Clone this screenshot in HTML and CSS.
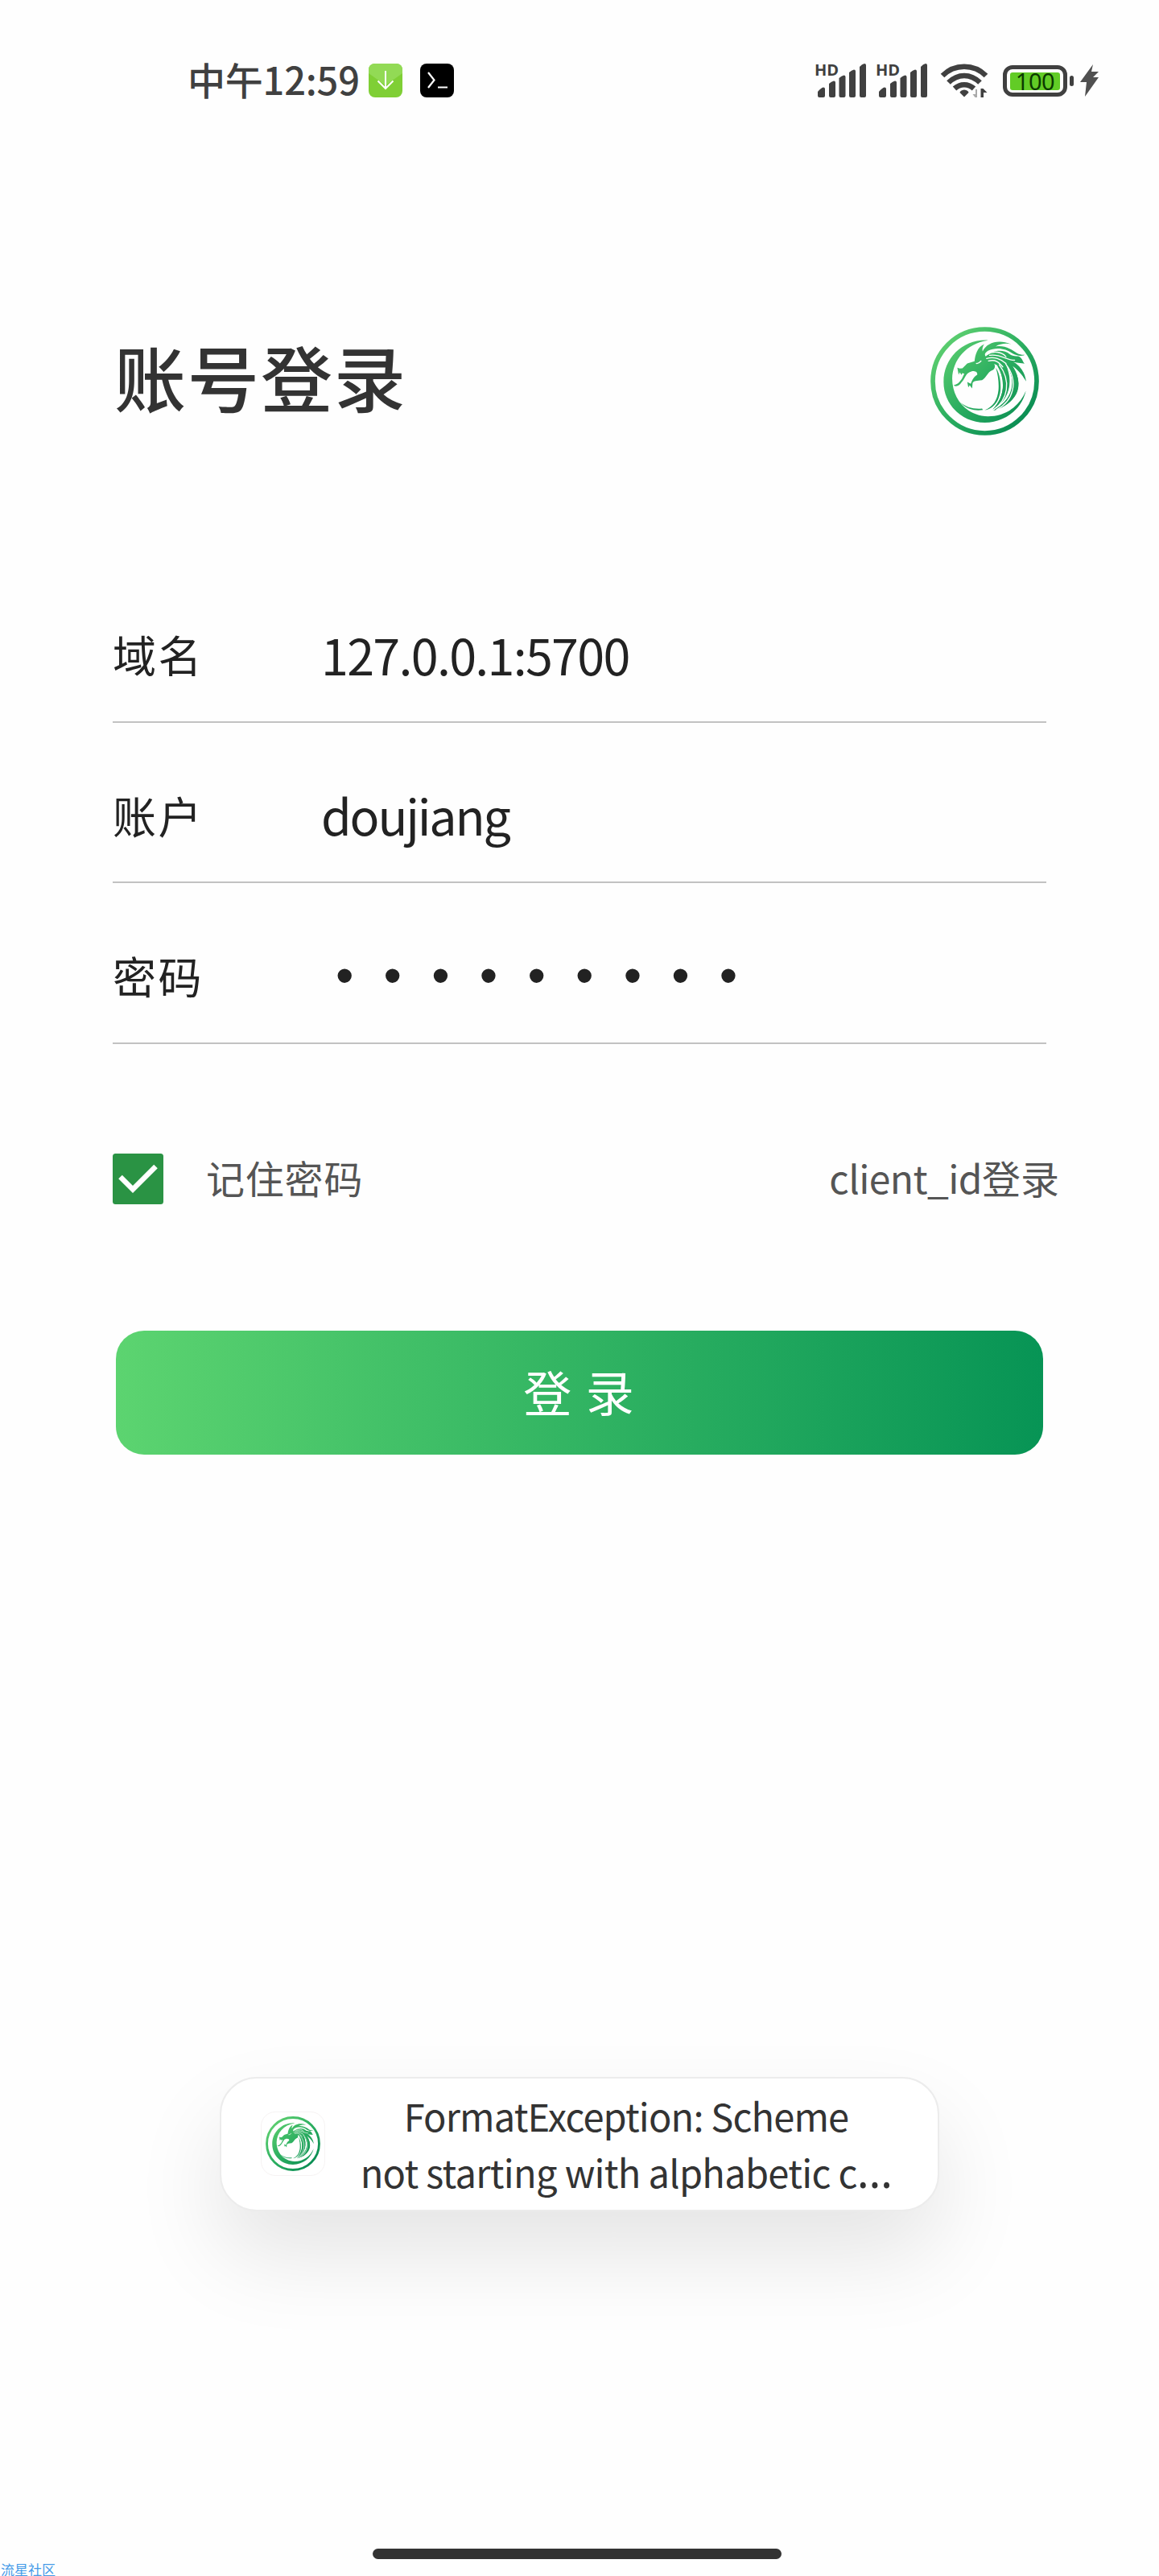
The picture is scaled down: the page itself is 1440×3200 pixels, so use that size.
FILE: index.html
```html
<!DOCTYPE html>
<html lang="zh-CN">
<head>
  <meta charset="UTF-8" />
  <title>账号登录</title>
  <link rel="stylesheet" href="styles.css">
</head>
<body>
  <svg class="defs" width="0" height="0">
    <defs>
      <linearGradient id="green" gradientUnits="userSpaceOnUse" x1="90" y1="90" x2="410" y2="410">
        <stop offset="0" stop-color="#5fd070" />
        <stop offset=".5" stop-color="#2bae60" />
        <stop offset="1" stop-color="#078a52" />
      </linearGradient>
      <symbol id="dragon" viewBox="48 45 404 404">
        <circle cx="250" cy="247" r="193" fill="none" stroke="url(#green)" stroke-width="17" />
        <g fill="url(#green)">
          <path d="M262 95C170 90 97 160 97 250C97 335 166 401 250 401C325 401 388 350 403 283C378 343 325 378 262 378C180 376 129 310 129 237C131 168 180 108 262 95Z" />
          <path d="M158 325C180 350 210 359 243 354L240 349C208 352 180 344 158 325ZM250 355C286 350 307 315 309 275C310 243 304 216 291 197C300 225 303 255 301 280C297 318 281 342 250 355Z" />
          <path d="M148 197L157 200L167 199L185 181L212 173C214 150 222 120 248 109C242 119 240 128 242 136C258 103 300 90 348 109C328 105 305 108 290 118C325 112 350 129 370 143C380 148 390 150 399 149C388 155 368 153 353 144C328 125 292 119 262 134C250 141 248 150 254 155C277 130 322 128 342 146C350 153 362 155 374 154C390 158 391 176 398 182C378 178 362 179 352 172C382 188 399 214 404 248C392 226 373 206 354 191C391 248 381 309 312 345C302 350 293 355 280 356C355 319 374 247 328 184C359 251 340 319 279 353C323 306 330 246 296 188L285 183C291 191 287 205 276 207C261 213 255 235 240 243C220 245 210 245 205 253L203 274L194 262L189 270L185 250L198 257C202 246 207 232 222 223C224 213 214 209 202 210C178 215 178 237 164 251C154 266 143 269 134 262C150 259 158 248 165 238L174 219L166 217L164 224L157 214L153 223Z" />
          <path d="M298 190C330 246 323 306 281 351C340 319 357 251 326 186ZM330 186C372 247 352 319 284 354L312 345C385 309 391 248 352 190Z" />
        </g>
        <g fill="none" stroke="#fefefe" stroke-linecap="round">
          <path d="M257 149C283 131 314 139 329 156M268 151C307 144 333 170 361 169M257 163C284 154 312 165 329 181M264 172C290 165 303 177 317 194" stroke-width="4" />
          <path d="M304 186C350 247 335 316 283 353M328 183C379 249 355 322 294 353" stroke-width="4" />
          <path d="M219 181Q226 183 236 172" stroke-width="4" />
        </g>
      </symbol>
      <symbol id="signal" viewBox="0 0 66 44">
        <path d="M4 41v-5q4-5 7-5.500q2 0 2 2v8.500q0 2-2 2H6q-2 0-2-2ZM18 41V26q3-3 6-3.500q2 0 2 2V41q0 2-2 2h-4q-2 0-2-2ZM30.500 41V19q3-3 6-3.500q2 0 2 2V41q0 2-2 2h-4q-2 0-2-2ZM43 41V12q3-3 6-3.500q2 0 2 2V41q0 2-2 2h-4q-2 0-2-2ZM56 41V5q3-3.500 6-4q2 0 2 2v38q0 2-2 2h-4q-2 0-2-2Z" fill="#404040" />
      </symbol>
    </defs>
  </svg>

  <div class="status-bar">
    <div class="status-left">
      <span class="time">中午12:59</span>
      <svg class="app-icon" viewBox="0 0 42 42">
        <rect width="42" height="42" rx="8" fill="#7fcf35" />
        <path d="M0 12L21 27L42 12V8Q42 0 34 0H8Q0 0 0 8Z" fill="#92da55" />
        <path d="M21 9V31M11.500 21.500L21 31L30.500 21.500" fill="none" stroke="#fff" stroke-width="2" />
      </svg>
      <svg class="app-icon" viewBox="0 0 42 42">
        <rect width="42" height="42" rx="8" fill="#000" />
        <path d="M10 11L17.500 20.500L10 30M22 29.500H34" fill="none" stroke="#fff" stroke-width="2.200" />
      </svg>
    </div>
    <div class="status-right">
      <div class="sim"><span class="hd">HD</span><svg viewBox="0 0 66 44"><use href="#signal" /></svg></div>
      <div class="sim"><span class="hd">HD</span><svg viewBox="0 0 66 44"><use href="#signal" /></svg></div>
      <svg class="wifi" viewBox="0 0 60 44">
        <g fill="none" stroke="#404040" stroke-width="6.500">
          <path d="M3 16C18 1 42 1 57 16" />
          <path d="M10.500 24.500C22 13 38 13 49.500 24.500" />
          <path d="M18 32C25 25.500 35 25.500 42 32" />
        </g>
        <path d="M30 42.500L24.500 37Q25 34 30 33.500Q35 34 35.500 37Z" fill="#404040" />
        <path d="M46 33v10h-2.500l-3-4H44v-6Z" fill="#aaa" />
        <path d="M50.500 43V32h3l5 5H54v6Z" fill="#404040" />
      </svg>
      <div class="battery"><span class="level">100</span></div>
      <svg class="bolt" viewBox="0 0 24 40">
        <path d="M16 0L0 22H8L6 40L23 16H16L23 9H14Z" fill="#505050" />
      </svg>
    </div>
  </div>

  <header class="header">
    <h1>账号登录</h1>
    <svg class="logo" viewBox="0 0 100 100"><use href="#dragon" /></svg>
  </header>

  <form class="login">
    <label class="field"><span class="name">域名</span><span class="value host">127.0.0.1:5700</span></label>
    <label class="field"><span class="name">账户</span><span class="value user">doujiang</span></label>
    <label class="field"><span class="name">密码</span><span class="value dots">•••••••••</span></label>
    <div class="options">
      <svg class="checkbox" viewBox="0 0 63 63">
        <rect width="63" height="63" rx="3.500" fill="#2a9344" />
        <path d="M9.500 29L25 44.500L53.500 16" fill="none" stroke="#fff" stroke-width="6.500" />
      </svg>
      <span class="remember">记住密码</span>
      <a class="switch"><span class="latin">client_id</span>登录</a>
    </div>
    <button type="button" class="submit">登 录</button>
  </form>

  <div class="toast">
    <div class="toast-icon"><svg viewBox="0 0 100 100"><use href="#dragon" /></svg></div>
    <p>FormatException: Scheme<br><span class="second">not starting with alphabetic c<span class="more">…</span></span></p>
  </div>

  <div class="home-bar"></div>
  <div class="watermark">流星社区</div>
</body>
</html>
```
FILE: styles.css
```css
* {margin: 0; padding: 0; box-sizing: border-box;}
body {
  width: 1440px;
  height: 3200px;
  position: relative;
  display: flex;
  flex-direction: column;
  overflow: hidden;
  background: #fefefe;
  color: #222;
  font-family: "Noto Sans CJK SC", sans-serif;
}
svg {
  display: block;
  flex: none;
}
.defs {
  position: absolute;
}

/* status bar */
.status-bar {
  height: 200px;
  padding: 0 74px 0 233px;
  display: flex;
  justify-content: space-between;
  align-items: center;
  flex: none;
}
.status-left, .status-right {
  display: flex;
  align-items: center;
}
.time {
  width: 225px;
  padding-bottom: 5px;
  font-size: 47px;
  font-weight: 500;
  line-height: 60px;
  letter-spacing: -.2px;
  color: #404040;
  white-space: nowrap;
}
.app-icon {
  width: 42px;
  height: 42px;
  margin-right: 22px;
}
.sim {
  position: relative;
  width: 66px;
  height: 44px;
  margin-right: 10px;
}
.sim svg {
  width: 66px;
  height: 44px;
}
.hd {
  position: absolute;
  left: 0;
  top: -1px;
  font: bold 20px/20px "Open Sans", sans-serif;
  color: #404040;
}
.wifi {
  width: 60px;
  height: 44px;
  margin-left: 4px;
}
.battery {
  position: relative;
  width: 80px;
  height: 39px;
  margin-left: 18px;
  padding: 4px;
  border: 5px solid #404040;
  border-radius: 12px;
}
.battery::after {
  content: "";
  position: absolute;
  right: -13px;
  top: 8px;
  width: 5px;
  height: 13px;
  border-radius: 3px;
  background: #404040;
}
.level {
  display: block;
  height: 22px;
  border-radius: 3px;
  background: #62cc26;
  color: #0b3a00;
  font: 29px/22px "Noto Sans", sans-serif;
  letter-spacing: -.5px;
  text-align: center;
}
.bolt {
  width: 24px;
  height: 40px;
  margin-left: 16px;
}

/* title */
.header {
  height: 341px;
  padding: 205px 149px 0 142px;
  display: flex;
  justify-content: space-between;
  align-items: center;
  flex: none;
}
.header h1 {
  padding-bottom: 12px;
  font-size: 89px;
  font-weight: 500;
  line-height: 100px;
  letter-spacing: 2px;
  color: #333;
}
.logo {
  width: 135px;
  height: 135px;
}

/* form */
.login {
  padding: 157px 140px 0;
}
.field {
  height: 199.500px;
  padding-top: 32px;
  display: flex;
  align-items: center;
  border-bottom: 2px solid #c2c2c2;
}
.name {
  width: 259px;
  padding-top: 1px;
  font-size: 54px;
  line-height: 70px;
  letter-spacing: 2.500px;
}
.value {
  font-size: 61px;
  line-height: 80px;
  white-space: nowrap;
}
.host {
  letter-spacing: -1.700px;
}
.user {
  letter-spacing: -2.200px;
}
.dots {
  margin-left: 18px;
  font-family: "Liberation Sans", sans-serif;
  font-size: 64px;
  letter-spacing: 37.200px;
}
.options {
  margin: 136px -16px 0 0;
  height: 63px;
  display: flex;
  align-items: center;
  font-size: 48px;
  line-height: 60px;
  color: #555;
}
.checkbox {
  width: 63px;
  height: 63px;
}
.remember {
  margin-left: 53px;
  padding-bottom: 4px;
  letter-spacing: .800px;
}
.switch {
  margin-left: auto;
  padding-bottom: 4px;
}
.latin {
  letter-spacing: -.600px;
}
.submit {
  display: block;
  width: 1152px;
  height: 154px;
  margin: 157px 0 0 4px;
  padding-bottom: 4px;
  border: none;
  border-radius: 35px;
  background: linear-gradient(90deg, #5cd470, #079455);
  color: #fff;
  font: 60px/80px "Noto Sans CJK SC", sans-serif;
  letter-spacing: 2px;
}

/* toast */
.toast {
  width: 894px;
  height: 167px;
  margin: 773px 0 0 273px;
  padding: 0 56px 0 49px;
  display: flex;
  align-items: center;
  flex: none;
  border: 2px solid #ececec;
  border-radius: 46px;
  background: #fff;
  box-shadow: 0 54px 110px rgba(0, 0, 0, .1);
}
.toast-icon {
  width: 80px;
  height: 80px;
  padding: 5px;
  border: 1px solid #f6f3f3;
  border-radius: 18px;
}
.toast-icon svg {
  width: 68px;
  height: 68px;
}
.toast p {
  flex: 1;
  margin-left: 43px;
  font-size: 47px;
  line-height: 70px;
  letter-spacing: -.850px;
  text-align: center;
  color: #333;
  white-space: nowrap;
}
.toast .second {
  letter-spacing: -.700px;
}
.more {
  font-family: "Noto Sans", sans-serif;
  font-size: 56px;
  line-height: 1;
}

.home-bar {
  position: absolute;
  left: 463px;
  top: 3166px;
  width: 508px;
  height: 13px;
  border-radius: 7px;
  background: #333;
}
.watermark {
  position: absolute;
  left: 1px;
  top: 3182px;
  font-size: 17px;
  line-height: 20px;
  color: #459be8;
}
```
